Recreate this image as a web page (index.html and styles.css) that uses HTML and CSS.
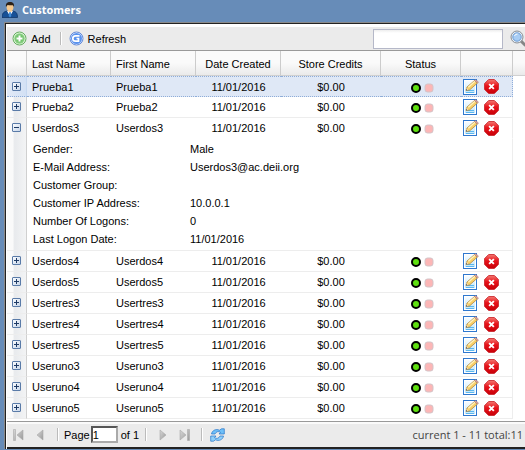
FILE: index.html
```html
<!DOCTYPE html>
<html lang="en">
<head>
<meta charset="utf-8">
<title>Customers</title>
<link rel="stylesheet" href="styles.css">
</head>
<body>
<svg class="defs" aria-hidden="true">
  <defs>
    <linearGradient id="box" x1="0" y1="0" x2="1" y2="1"><stop offset="0" stop-color="#fff"/><stop offset="1" stop-color="#c3d3e8"/></linearGradient>
    <linearGradient id="page" x1="0" y1="0" x2="0" y2="1"><stop offset="0" stop-color="#fff"/><stop offset="1" stop-color="#b9e4fb"/></linearGradient>
    <linearGradient id="red" x1="0" y1="0" x2="0" y2="1"><stop offset="0" stop-color="#f47a72"/><stop offset=".45" stop-color="#e8121a"/><stop offset="1" stop-color="#c80008"/></linearGradient>
    <linearGradient id="grey" x1="0" y1="0" x2="1" y2="1"><stop offset="0" stop-color="#d8d8d8"/><stop offset="1" stop-color="#999"/></linearGradient>
    <radialGradient id="green"><stop offset="0" stop-color="#4fae4a"/><stop offset="1" stop-color="#8fd488"/></radialGradient>
  </defs>
  <symbol id="plus" viewBox="0 0 9 9"><rect x=".5" y=".5" width="8" height="8" rx=".5" fill="url(#box)" stroke="#5a7ba8"/><path d="M2 4.500h5M4.500 2v5" stroke="#1f3b66"/></symbol>
  <symbol id="minus" viewBox="0 0 9 9"><rect x=".5" y=".5" width="8" height="8" rx=".5" fill="url(#box)" stroke="#5a7ba8"/><path d="M2 4.500h5" stroke="#1f3b66"/></symbol>
  <symbol id="on" viewBox="0 0 10 10"><circle cx="5" cy="5" r="4" fill="#5fe010" stroke="#000" stroke-width="2"/></symbol>
  <symbol id="off" viewBox="0 0 10 10"><rect x="1" y="1" width="8" height="8" rx="2.500" fill="#fcb6b6" stroke="#d3c4c8"/></symbol>
  <symbol id="edit" viewBox="0 0 16 16"><rect x=".5" y=".5" width="13" height="15" fill="url(#page)" stroke="#2f78cf"/><rect x="1.500" y="1.500" width="11" height="13" fill="none" stroke="#fff"/><path d="M3 11.500h8M3 13.500h8" stroke="#5bb6ee"/><path d="M3 11.500l1-3.500 7.500-6.500 3 2.500-8 7z" fill="#f9d068" stroke="#a87b35" stroke-width=".7"/><path d="M5.300 8.300l6.700-6" stroke="#fff3c0" stroke-width="1.200"/><path d="M11.500 1.500l1-1 3 2.500-1 1z" fill="#e9a9a0" stroke="#9b7070" stroke-width=".5"/><path d="M3 11.500l.7-2.500 1.800 1.800z" fill="#fbe8c8"/><path d="M3 11.500l.4-1.400 1 1z" fill="#333"/></symbol>
  <symbol id="delete" viewBox="0 0 14 14"><path d="M4.300.5h5.400l3.800 3.800v5.400l-3.800 3.800H4.300L.5 9.700V4.300z" fill="url(#red)" stroke="#c9232a" stroke-width=".8"/><path d="M4.800 4.800l4.400 4.400M9.200 4.800L4.800 9.200" stroke="#fff" stroke-width="1.800"/></symbol>
</svg>

<header class="title">
  <svg width="16" height="16" viewBox="0 0 16 16" aria-hidden="true"><path d="M0 15.500C0 11 2 9.500 5.500 9h5c3.500.5 5 2 5 6.500z" fill="#175096" stroke="#0c2f62" stroke-width=".7"/><path d="M5 9l3 5 3-5z" fill="#fff"/><path d="M7.300 10h1.400l.6 4L8 15.500 6.700 14z" fill="#3f8ad6"/><path d="M4.500 4.500C4.500 8 6 10 8 10s3.500-2 3.500-5.500L10 2H6z" fill="#f6c98e"/><path d="M4 5C3.500 1.500 5 0 8 0s4.500 1.500 4 5l-1-1.800C9 3.500 7 3 5.500 3z" fill="#2c2118"/></svg>
  <h1>Customers</h1>
</header>

<main class="panel">
  <div class="toolbar">
    <button type="button" class="tool">
      <svg width="15" height="15" viewBox="0 0 15 15" aria-hidden="true"><circle cx="7.500" cy="7.500" r="6.500" fill="#e5f7e0" stroke="#65ad60"/><circle cx="7.500" cy="7.500" r="5.200" fill="url(#green)"/><path d="M7.500 4.500v6M4.500 7.500h6" stroke="#fff" stroke-width="2"/></svg>Add
    </button>
    <span class="sep"></span>
    <button type="button" class="tool">
      <svg width="15" height="15" viewBox="0 0 15 15" aria-hidden="true"><circle cx="7.500" cy="7.500" r="6.500" fill="#e8f1ff" stroke="#648ad8"/><circle cx="7.500" cy="7.500" r="5.500" fill="#5b93ee"/><path d="M10.500 4.800H6.500a2.600 2.600 0 0 0 0 5.400H9.500V7.500H7.500" fill="none" stroke="#fff" stroke-width="1.700"/></svg>Refresh
    </button>
    <form class="search">
      <input type="text" class="query" aria-label="Search customers">
      <button type="button" class="go" aria-label="Search"><svg width="17" height="17" viewBox="0 0 17 17" aria-hidden="true"><path d="M11 11l4 4" stroke="#858585" stroke-width="3" stroke-linecap="round"/><circle cx="7" cy="7" r="6" fill="#e9eff5" stroke="#898f96"/><circle cx="7" cy="7" r="4.200" fill="#a8cdf4" stroke="#6b9cd4"/><path d="M4.500 6a3 3 0 0 1 3-2" stroke="#fff" fill="none"/></svg></button>
    </form>
  </div>

  <table class="grid">
    <colgroup><col class="c-exp"><col class="c-last"><col class="c-name"><col class="c-name"><col class="c-credit"><col class="c-status"><col class="c-act"><col></colgroup>
    <thead>
      <tr><th></th><th class="left">Last Name</th><th class="left">First Name</th><th>Date Created</th><th>Store Credits</th><th>Status</th><th></th><th></th></tr>
    </thead>
    <tbody>
      <tr class="selected"><td class="exp"><button type="button" aria-label="Expand"><svg><use href="#plus"/></svg></button></td><td>Prueba1</td><td>Prueba1</td><td class="mid">11/01/2016</td><td class="mid">$0.00</td><td class="status"><svg><use href="#on"/></svg><svg><use href="#off"/></svg></td><td class="act"><button type="button" aria-label="Edit"><svg><use href="#edit"/></svg></button><button type="button" aria-label="Delete"><svg><use href="#delete"/></svg></button></td></tr>
      <tr><td class="exp"><button type="button" aria-label="Expand"><svg><use href="#plus"/></svg></button></td><td>Prueba2</td><td>Prueba2</td><td class="mid">11/01/2016</td><td class="mid">$0.00</td><td class="status"><svg><use href="#on"/></svg><svg><use href="#off"/></svg></td><td class="act"><button type="button" aria-label="Edit"><svg><use href="#edit"/></svg></button><button type="button" aria-label="Delete"><svg><use href="#delete"/></svg></button></td></tr>
      <tr class="open"><td class="exp" rowspan="2"><button type="button" aria-label="Collapse"><svg><use href="#minus"/></svg></button></td><td>Userdos3</td><td>Userdos3</td><td class="mid">11/01/2016</td><td class="mid">$0.00</td><td class="status"><svg><use href="#on"/></svg><svg><use href="#off"/></svg></td><td class="act"><button type="button" aria-label="Edit"><svg><use href="#edit"/></svg></button><button type="button" aria-label="Delete"><svg><use href="#delete"/></svg></button></td></tr>
      <tr><td class="detail" colspan="6">
        <dl>
          <dt>Gender:</dt><dd>Male</dd>
          <dt>E-Mail Address:</dt><dd>Userdos3@ac.deii.org</dd>
          <dt>Customer Group:</dt><dd></dd>
          <dt>Customer IP Address:</dt><dd>10.0.0.1</dd>
          <dt>Number Of Logons:</dt><dd>0</dd>
          <dt>Last Logon Date:</dt><dd>11/01/2016</dd>
        </dl>
      </td></tr>
      <tr><td class="exp"><button type="button" aria-label="Expand"><svg><use href="#plus"/></svg></button></td><td>Userdos4</td><td>Userdos4</td><td class="mid">11/01/2016</td><td class="mid">$0.00</td><td class="status"><svg><use href="#on"/></svg><svg><use href="#off"/></svg></td><td class="act"><button type="button" aria-label="Edit"><svg><use href="#edit"/></svg></button><button type="button" aria-label="Delete"><svg><use href="#delete"/></svg></button></td></tr>
      <tr><td class="exp"><button type="button" aria-label="Expand"><svg><use href="#plus"/></svg></button></td><td>Userdos5</td><td>Userdos5</td><td class="mid">11/01/2016</td><td class="mid">$0.00</td><td class="status"><svg><use href="#on"/></svg><svg><use href="#off"/></svg></td><td class="act"><button type="button" aria-label="Edit"><svg><use href="#edit"/></svg></button><button type="button" aria-label="Delete"><svg><use href="#delete"/></svg></button></td></tr>
      <tr><td class="exp"><button type="button" aria-label="Expand"><svg><use href="#plus"/></svg></button></td><td>Usertres3</td><td>Usertres3</td><td class="mid">11/01/2016</td><td class="mid">$0.00</td><td class="status"><svg><use href="#on"/></svg><svg><use href="#off"/></svg></td><td class="act"><button type="button" aria-label="Edit"><svg><use href="#edit"/></svg></button><button type="button" aria-label="Delete"><svg><use href="#delete"/></svg></button></td></tr>
      <tr><td class="exp"><button type="button" aria-label="Expand"><svg><use href="#plus"/></svg></button></td><td>Usertres4</td><td>Usertres4</td><td class="mid">11/01/2016</td><td class="mid">$0.00</td><td class="status"><svg><use href="#on"/></svg><svg><use href="#off"/></svg></td><td class="act"><button type="button" aria-label="Edit"><svg><use href="#edit"/></svg></button><button type="button" aria-label="Delete"><svg><use href="#delete"/></svg></button></td></tr>
      <tr><td class="exp"><button type="button" aria-label="Expand"><svg><use href="#plus"/></svg></button></td><td>Usertres5</td><td>Usertres5</td><td class="mid">11/01/2016</td><td class="mid">$0.00</td><td class="status"><svg><use href="#on"/></svg><svg><use href="#off"/></svg></td><td class="act"><button type="button" aria-label="Edit"><svg><use href="#edit"/></svg></button><button type="button" aria-label="Delete"><svg><use href="#delete"/></svg></button></td></tr>
      <tr><td class="exp"><button type="button" aria-label="Expand"><svg><use href="#plus"/></svg></button></td><td>Useruno3</td><td>Useruno3</td><td class="mid">11/01/2016</td><td class="mid">$0.00</td><td class="status"><svg><use href="#on"/></svg><svg><use href="#off"/></svg></td><td class="act"><button type="button" aria-label="Edit"><svg><use href="#edit"/></svg></button><button type="button" aria-label="Delete"><svg><use href="#delete"/></svg></button></td></tr>
      <tr><td class="exp"><button type="button" aria-label="Expand"><svg><use href="#plus"/></svg></button></td><td>Useruno4</td><td>Useruno4</td><td class="mid">11/01/2016</td><td class="mid">$0.00</td><td class="status"><svg><use href="#on"/></svg><svg><use href="#off"/></svg></td><td class="act"><button type="button" aria-label="Edit"><svg><use href="#edit"/></svg></button><button type="button" aria-label="Delete"><svg><use href="#delete"/></svg></button></td></tr>
      <tr><td class="exp"><button type="button" aria-label="Expand"><svg><use href="#plus"/></svg></button></td><td>Useruno5</td><td>Useruno5</td><td class="mid">11/01/2016</td><td class="mid">$0.00</td><td class="status"><svg><use href="#on"/></svg><svg><use href="#off"/></svg></td><td class="act"><button type="button" aria-label="Edit"><svg><use href="#edit"/></svg></button><button type="button" aria-label="Delete"><svg><use href="#delete"/></svg></button></td></tr>
    </tbody>
  </table>

  <footer class="pager">
    <button type="button" class="nav" aria-label="First page"><svg width="11" height="12" viewBox="0 0 11 12"><path d="M.5.5h2v11h-2zM10 1v10L4 6z" fill="url(#grey)" stroke="#aaa" stroke-width=".6"/></svg></button>
    <button type="button" class="nav" aria-label="Previous page"><svg width="11" height="12" viewBox="0 0 11 12"><path d="M8 1v10L2 6z" fill="url(#grey)" stroke="#aaa" stroke-width=".6"/></svg></button>
    <span class="sep"></span>
    <label for="page-no">Page</label>
    <input type="text" id="page-no" class="page-no" value="1">
    <span class="count">of 1</span>
    <span class="sep"></span>
    <button type="button" class="nav" aria-label="Next page"><svg width="11" height="12" viewBox="0 0 11 12"><path d="M3 1v10l6-5z" fill="url(#grey)" stroke="#aaa" stroke-width=".6"/></svg></button>
    <button type="button" class="nav" aria-label="Last page"><svg width="11" height="12" viewBox="0 0 11 12"><path d="M1 1v10l6-5zM8.500.5h2v11h-2z" fill="url(#grey)" stroke="#aaa" stroke-width=".6"/></svg></button>
    <span class="sep"></span>
    <button type="button" class="nav" aria-label="Reload"><svg width="15" height="14" viewBox="0 0 15 14"><path d="M1.500 6C2 2.500 6 .5 9.500 2.200L11.500.8h2.800V6H9l1.500-1.700C8.500 3 6 3.500 5 6z" fill="#6fc0f8" stroke="#2473c8" stroke-width=".7"/><path d="M13.500 8C13 11.500 9 13.500 5.500 11.800L3.500 13.200H.7V8H6L4.500 9.700C6.500 11 9 10.500 10 8z" fill="#8fd0fa" stroke="#2473c8" stroke-width=".7"/></svg></button>
    <output class="summary">current 1 - 11 total:11</output>
  </footer>
</main>
</body>
</html>
```
FILE: styles.css
```css
* { box-sizing: border-box; }

body {
  margin: 0;
  min-height: 100vh;
  overflow: hidden;
  background: #678cb8;
  color: #000;
  font: 11px/16px "Liberation Sans", Arial, sans-serif;
}

.defs { position: absolute; width: 0; height: 0; }

button {
  padding: 0;
  border: 0;
  background: none;
  color: inherit;
  font: inherit;
}

svg { display: block; flex: none; }

.title {
  display: flex;
  align-items: center;
  gap: 4px;
  height: 22px;
  padding: 0 2px 2px;
}

.title h1 {
  margin: 0;
  color: #fff;
  font: bold 11px/16px "Open Sans", Tahoma, sans-serif;
}

.panel {
  margin-left: 4px;
  border: 1px solid #8a8a8a;
  border-width: 1px 0 0 1px;
  box-shadow: inset 1px 1px #222;
  padding: 2px 0 0 2px;
  background: #fff;
}

.toolbar {
  display: flex;
  align-items: center;
  height: 26px;
  padding-left: 5px;
  border-top: 2px solid #fff;
  border-bottom: 1px solid #999;
  background: #ebebeb;
}

.tool {
  display: flex;
  align-items: center;
  gap: 4px;
  font-size: 11px;
}

.sep {
  width: 2px;
  height: 13px;
  border-left: 1px solid #bbb;
  border-right: 1px solid #fff;
}

.toolbar .sep { margin: 0 7px 0 9px; }

.search {
  display: flex;
  align-items: center;
  gap: 7px;
  margin-left: auto;
  margin-right: -2px;
}

.query {
  width: 130px;
  height: 20px;
  border: 1px solid #b5b8c8;
  background: linear-gradient(#eee, #fff 3px);
}

.grid {
  width: 100%;
  table-layout: fixed;
  border-collapse: separate;
  border-spacing: 0;
  background: #fff;
}

.c-exp { width: 20px; }
.c-last { width: 84px; }
.c-name { width: 85px; }
.c-credit { width: 100px; }
.c-status { width: 80px; }
.c-act { width: 52px; }

th {
  height: 25px;
  padding: 2px 5px 0;
  border-right: 1px solid #ccc;
  border-bottom: 1px solid #d0d0d0;
  background: linear-gradient(#fafafa 50%, #eaeaea);
  font-weight: normal;
}

th:last-child { border-right: 0; }
.left { text-align: left; }

td {
  height: 21px;
  padding: 2px 5px;
  border-bottom: 1px solid #ededed;
}

.mid { text-align: center; }

.exp {
  padding: 5px 0 0 5px;
  border-right: 1px solid #d0d0d0;
  background: linear-gradient(90deg, #fafafa 30%, #e8eaed 40%, #f3f4f5);
  vertical-align: top;
}

.exp button { display: block; }
.exp svg { width: 9px; height: 9px; }

.status, .act { padding: 0; font-size: 0; line-height: 0; }
.status { padding: 2px 0 0 2px; text-align: center; }
.status svg {
  display: inline-block;
  width: 10px;
  height: 10px;
  margin: 0 2px;
  vertical-align: middle;
}
.status svg + svg { margin-left: 1px; }

.act { padding-left: 2px; border-right: 1px solid #ededed; white-space: nowrap; }
.act button { width: 21px; vertical-align: middle; }
.act svg { width: 16px; height: 16px; }
.act button + button svg { width: 15px; height: 15px; }

.selected td {
  border-top: 1px dotted #8fadd8;
  border-bottom: 1px dotted #8fadd8;
  background: #dfe8f6;
}
.selected .act { border-right: 1px dotted #8fadd8; }
.selected .exp { background: linear-gradient(90deg, #dfe8f6 20%, #d3e1f5); border-right-color: #c6d8f0; }
.selected td:not(.exp, .status, .act) { padding: 1px 5px; }

.open td:not(.exp) { border-bottom-color: transparent; }

.detail { padding: 1px 6px; border-right: 1px solid #ededed; }

dl {
  display: grid;
  grid-template-columns: 157px 1fr;
  grid-auto-rows: 18px;
  align-items: center;
  margin: 0;
  padding-bottom: 1px;
}

dd { margin: 0; }

.pager {
  display: flex;
  align-items: center;
  height: 28px;
  margin-top: 2px;
  padding: 0 2px 0 6px;
  border-top: 1px solid #999;
  border-bottom: 2px solid #222;
  background: #ebebeb;
  box-shadow: inset 0 2px #fafafa;
}

.nav { margin-right: 11px; }
.pager .sep { margin-right: 5px; }
.page-no {
  width: 27px;
  height: 17px;
  margin: 0 3px 0 1px;
  padding: 1px 0;
  border: 2px inset #aaa;
  background: #fff;
  font: inherit;
}
.count { margin-right: 6px; }
.count + .sep { margin-right: 10px; }
.nav + .sep:has(+ .nav) { margin-right: 7px; }
.summary {
  margin-left: auto;
  color: #444;
  font: 11px/16px "Open Sans", Tahoma, sans-serif;
}
```
